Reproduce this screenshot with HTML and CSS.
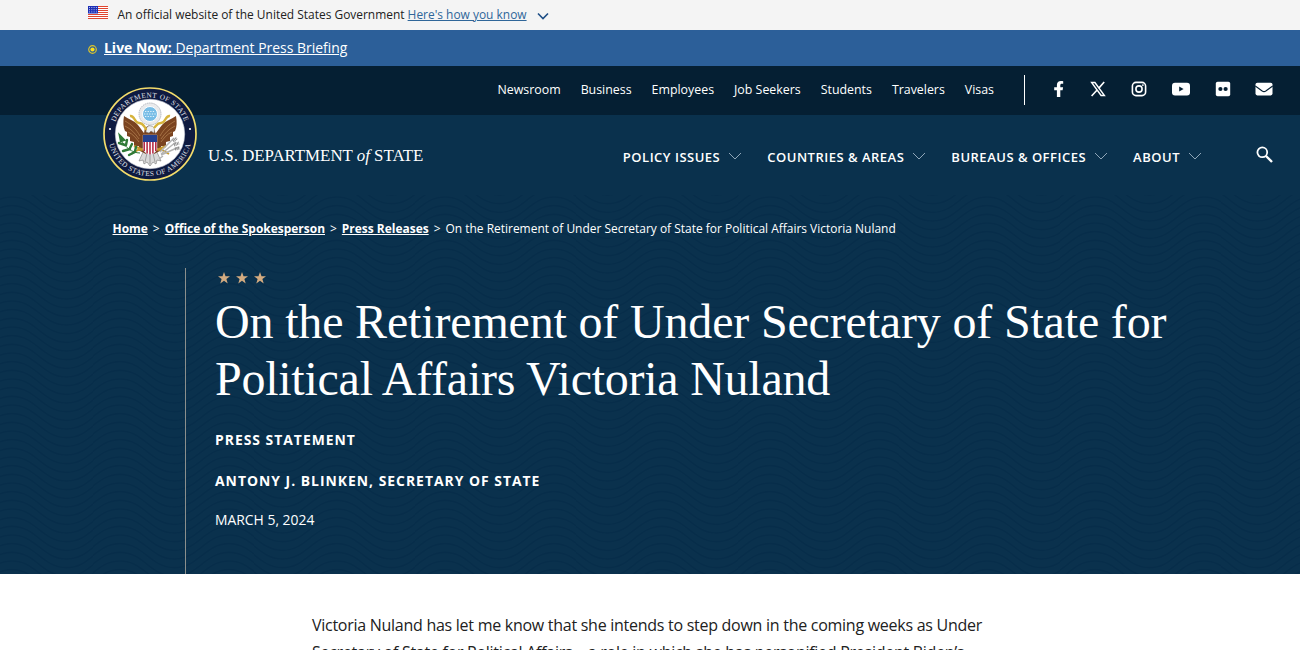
FILE: index.html
```html
<!DOCTYPE html>
<html lang="en">
  <head>
    <meta charset="UTF-8" />
    <meta name="viewport" content="width=device-width, initial-scale=1.0" />
    <title>On the Retirement of Under Secretary of State for Political Affairs Victoria Nuland</title>
    <link rel="stylesheet" href="styles.css">
  </head>
  <body>
    <div class="gov-banner">
      <svg class="flag" viewBox="0 0 20 13">
        <rect width="20" height="13" fill="#fff"/>
        <path d="M0 .5h20M0 2.5h20M0 4.5h20M0 6.5h20M0 8.5h20M0 10.5h20M0 12.5h20" stroke="#e0452f" stroke-width="1.1"/>
        <rect width="10" height="7.5" fill="#1c2fb5"/>
        <path d="M1 1.5h8M1 3.7h8M1 5.9h8" stroke="#c9cff5" stroke-width=".9" stroke-dasharray="1 1.3"/>
      </svg>
      <p>An official website of the United States Government <a href="#">Here's how you know</a></p>
      <svg class="banner-arrow" viewBox="0 0 12 8"><path d="M1 1.5l5 5 5-5" fill="none" stroke="#1f4f86" stroke-width="1.6"/></svg>
    </div>

    <div class="live-bar">
      <svg class="live-dot" viewBox="0 0 9 9">
        <circle cx="4.5" cy="4.5" r="3.8" fill="none" stroke="#d9c32e" stroke-width="1.2"/>
        <circle cx="4.5" cy="4.5" r="2.1" fill="#ffe01a"/>
      </svg>
      <a href="#"><strong>Live Now:</strong> Department Press Briefing</a>
    </div>

    <header>
      <div class="top-nav">
        <nav>
          <a href="#">Newsroom</a>
          <a href="#">Business</a>
          <a href="#">Employees</a>
          <a href="#">Job Seekers</a>
          <a href="#">Students</a>
          <a href="#">Travelers</a>
          <a href="#">Visas</a>
        </nav>
        <div class="social">
          <a href="#" aria-label="Facebook"><svg viewBox="0 0 18 18"><path d="M6.900 17V10.300H4.200V7.200h2.700V4.900C6.900 2.300 8.500 1 10.900 1c1.200 0 2.300.2 2.300.2v2.600h-1.300c-1.200 0-1.600.7-1.600 1.500v1.900h2.800l-.5 3.100h-2.300V17z" fill="#fff"/></svg></a>
          <a class="x" href="#" aria-label="X"><svg viewBox="0 0 18 18"><path d="M2.7 2.6h3.2l9.400 12.800h-3.200z" fill="none" stroke="#fff" stroke-width="1.500"/><path d="M15.200 2L9.800 8.100M8.100 10L2.600 16" stroke="#fff" stroke-width="1.600"/></svg></a>
          <a href="#" aria-label="Instagram"><svg viewBox="0 0 18 18"><rect x="2.400" y="2.400" width="13.200" height="13.200" rx="3.600" fill="none" stroke="#fff" stroke-width="1.600"/><circle cx="9" cy="9" r="3.100" fill="none" stroke="#fff" stroke-width="1.600"/><circle cx="12.900" cy="5.100" r=".9" fill="#fff"/></svg></a>
          <a class="wide" href="#" aria-label="YouTube"><svg viewBox="0 0 18 18"><rect x="0" y="2.800" width="18" height="12.600" rx="3" fill="#fff"/><path d="M7.200 6.600v5l4.400-2.500z" fill="#051f33"/></svg></a>
          <a class="wide" href="#" aria-label="Flickr"><svg viewBox="0 0 18 18"><rect x="1.800" y="1.800" width="14.400" height="14.400" rx="1.800" fill="#fff"/><circle cx="6.400" cy="9" r="2.100" fill="#051f33"/><circle cx="11.600" cy="9" r="2.100" fill="#051f33"/></svg></a>
          <a href="#" aria-label="Email"><svg viewBox="0 0 18 18"><rect x=".5" y="2.800" width="17" height="12.600" rx="1.800" fill="#fff"/><path d="M.3 6l6.900 5q1.800 1.200 3.600 0l6.900-5" fill="none" stroke="#051f33" stroke-width="1.100"/></svg></a>
        </div>
      </div>

      <div class="main-nav">
        <a class="brand" href="#">
          <svg class="seal" viewBox="0 0 94 94">
            <defs>
              <path id="ring-top" d="M10.4 47a36.6 36.6 0 0 1 73.2 0"/>
              <path id="ring-bottom" d="M5 47a42 42 0 0 0 84 0"/>
            </defs>
            <circle cx="47" cy="47" r="46" fill="#0e1a40" stroke="#f3dc6b" stroke-width="1.700"/>
            <circle cx="47" cy="47" r="34.700" fill="#fff" stroke="#cfd2dc" stroke-width=".6"/>
            <text class="seal-text"><textPath href="#ring-top" startOffset="50%">DEPARTMENT OF STATE</textPath></text>
            <text class="seal-text"><textPath href="#ring-bottom" startOffset="50%">UNITED STATES OF AMERICA</textPath></text>
            <circle cx="7" cy="42" r="1.100" fill="#fff"/>
            <circle cx="87" cy="42" r="1.100" fill="#fff"/>
            <!-- glory -->
            <circle cx="47" cy="27" r="11" fill="#e9eaec" stroke="#a6abb3" stroke-width=".8" stroke-dasharray="1.500 .7"/>
            <circle cx="47" cy="27" r="7.500" fill="#77bde6" stroke="#fff"/>
            <path d="M42 24.500h10M41 27h12M42 29.500h10" stroke="#e3f3fc" stroke-width="1.200" stroke-dasharray="1.300 1.300"/>
            <!-- tail -->
            <path d="M41 63l-5 11 4-1 1 4 3-2 3 4 3-4 3 2 1-4 4 1-5-11z" fill="#d9d9d9" stroke="#777" stroke-width=".6"/>
            <path d="M44 66l-2 9M47 66v11M50 66l2 9" stroke="#777" stroke-width=".6"/>
            <!-- wings and body -->
            <path d="M42 47c-4-4-6-10-12-13-4-2-7-4-9-5-1 6-1 11 1 15l2 1 0 4 3 1 0 4 4 1 0 4 5 0-1 4 8 4z" fill="#7a4320"/>
            <path d="M52 47c4-4 6-10 12-13 4-2 7-4 9-5 1 6 1 11-1 15l-2 1 0 4-3 1 0 4-4 1 0 4-5 0 1 4-8 4z" fill="#7a4320"/>
            <path d="M22 34c7 4 11 8 15 15M22 39c6 3 10 7 14 13M25 45c5 2 8 6 11 10M72 34c-7 4-11 8-15 15M72 39c-6 3-10 7-14 13M69 45c-5 2-8 6-11 10" fill="none" stroke="#b68554" stroke-width=".7"/>
            <path d="M41 49c0-6 1-9 4-10 4-1 7 2 8 10z" fill="#7a4320"/>
            <path d="M43 45c0-5 2-7 5-6 3 0 4 3 3 7l-3-2-2 2z" fill="#eee" stroke="#777" stroke-width=".5"/>
            <path d="M44 41l-3 1.500 2.500 1z" fill="#d9a520"/>
            <!-- ribbon -->
            <path d="M27 29c5-1 4 7 9 7 4 0 4 2 7 6M67 29c-5-1-4 7-9 7-4 0-4 2-7 5" fill="none" stroke="#d6b33b" stroke-width="2.400"/>
            <path d="M31 59l9 4M63 59l-9 4M28 67l7-4 5-1M66 67l-7-4-5-1" fill="none" stroke="#c99b2c" stroke-width="2"/>
            <!-- olive branch and arrows -->
            <path d="M37 66c-8 0-15-6-19-13" fill="none" stroke="#2f7a37" stroke-width="1"/>
            <path d="M18 54l-1-5 4 4zM22 58l-6-2M23 58l1-5M27 62l-7 2M27 61l2-4M32 65l-6 3M32 64l1-4" fill="#2f7a37" stroke="#2f7a37" stroke-width="2.400" stroke-linecap="round"/>
            <path d="M58 67l15-12M58 68l18-8M57 65l14-14M60 69l-4 3" fill="none" stroke="#b3b3b3" stroke-width="1.500"/>
            <path d="M70 54l4-3M71 58l5-2M72 62l5-1" stroke="#8b8b8b" stroke-width="3" stroke-dasharray="1 .6"/>
            <!-- shield -->
            <path d="M40 48h14v14q-1 4-7 6-6-2-7-6z" fill="#fff" stroke="#c8cada" stroke-width=".5"/>
            <path d="M41.200 55v9M44.100 55v11.500M47 55v12.500M49.900 55v11.500M52.800 55v9" stroke="#b3223c" stroke-width="1.500"/>
            <rect x="40" y="48" width="14" height="7" fill="#24408f"/>
          </svg>
          <span class="brand-name">U.S. DEPARTMENT <em>of</em> STATE</span>
        </a>
        <nav>
          <a href="#">Policy Issues <svg viewBox="0 0 14 8"><path d="M1 1l6 6 6-6"/></svg></a>
          <a href="#">Countries &amp; Areas <svg viewBox="0 0 14 8"><path d="M1 1l6 6 6-6"/></svg></a>
          <a href="#">Bureaus &amp; Offices <svg viewBox="0 0 14 8"><path d="M1 1l6 6 6-6"/></svg></a>
          <a href="#">About <svg viewBox="0 0 14 8"><path d="M1 1l6 6 6-6"/></svg></a>
        </nav>
        <button class="search" aria-label="Search">
          <svg viewBox="0 0 17 17"><circle cx="6.300" cy="6.300" r="4.900" fill="none" stroke="#fff" stroke-width="1.800"/><path d="M10 10l6 6" stroke="#fff" stroke-width="2.400"/></svg>
        </button>
      </div>
    </header>

    <section class="hero">
      <div class="breadcrumbs">
        <a href="#">Home</a><span>&gt;</span><a href="#">Office of the Spokesperson</a><span>&gt;</span><a href="#">Press Releases</a><span>&gt;</span>On the Retirement of Under Secretary of State for Political Affairs Victoria Nuland
      </div>
      <div class="hero-content">
        <svg class="stars" viewBox="0 0 50 12" fill="#d3ab80">
          <path id="star" d="M6 0l1.500 4.300H12L8.400 7l1.300 4.400L6 8.800l-3.700 2.600L3.600 7 0 4.300h4.500z"/>
          <use href="#star" x="18"/>
          <use href="#star" x="36"/>
        </svg>
        <h1><span class="line-one">On the Retirement of Under Secretary of State for</span> <span class="line-two">Political Affairs Victoria Nuland</span></h1>
        <p class="doctype">Press Statement</p>
        <p class="author">Antony J. Blinken, Secretary of State</p>
        <p class="date">March 5, 2024</p>
      </div>
    </section>

    <main>
      <p>Victoria Nuland has let me know that she intends to step down in the coming weeks as Under Secretary of State for Political Affairs – a role in which she has personified President Biden’s</p>
    </main>
  </body>
</html>
```
FILE: styles.css
```css
* {
  box-sizing: border-box;
}
body {
  font-family: "Open Sans", sans-serif;
  margin: 0;
  height: 650px;
  overflow: hidden;
  color: #212121;
  background: #fff;
}
p {
  margin: 0;
}
svg {
  display: block;
}
.gov-banner {
  display: flex;
  height: 29.5px;
  padding-left: 87.5px;
  background: #f4f4f4;
  font-size: 11.94px;
  line-height: 29px;
}
.gov-banner a {
  color: #2f6699;
}
.flag {
  width: 20px;
  height: 13px;
  margin: 6px 10px 0 0;
}
.banner-arrow {
  width: 12px;
  height: 8px;
  margin: 12px 0 0 10px;
}
.live-bar {
  display: flex;
  align-items: center;
  height: 36px;
  padding-left: 88px;
  background: #2c5f99;
  font-size: 13.95px;
}
.live-bar a {
  color: #fff;
}
.live-dot {
  width: 9px;
  height: 9px;
  margin: 3px 7px 0 0;
}
header {
  background: #0a314d;
}
.top-nav {
  display: flex;
  justify-content: flex-end;
  height: 49.5px;
  background: #051f33;
}
.top-nav nav {
  display: flex;
  gap: 20px;
  margin-right: 29.5px;
  font-size: 12.38px;
  line-height: 47px;
}
.top-nav nav a {
  color: #fff;
  text-decoration: none;
}
.social {
  display: flex;
  gap: 23.1px;
  height: 30px;
  margin-top: 9.5px;
  padding: 5px 27px 0 25px;
  border-left: 1px solid #fff;
}
.social svg {
  width: 18px;
  height: 18px;
}
.social .x {
  margin-left: -2px;
}
.social .wide {
  margin-left: 1px;
}
.main-nav {
  display: flex;
  height: 80px;
  padding-left: 103px;
}
.brand {
  display: flex;
  color: #fff;
  text-decoration: none;
}
.seal {
  width: 94px;
  height: 94px;
  margin-top: -28px;
}
.seal-text {
  font-family: "Liberation Serif", serif;
  font-size: 7.2px;
  letter-spacing: 0.5px;
  fill: #e4e6ec;
  text-anchor: middle;
}
.brand-name {
  width: 218px;
  margin: 30px 0 0 11px;
  font-family: "Liberation Serif", serif;
  font-size: 16.85px;
  line-height: 22px;
  white-space: nowrap;
}
.main-nav nav {
  display: flex;
  gap: 25px;
  margin-left: auto;
  font-size: 13px;
  font-weight: 600;
  letter-spacing: 0.5px;
  line-height: 84px;
}
.main-nav nav a {
  display: flex;
  align-items: center;
  gap: 8px;
  height: 84px;
  color: #fff;
  text-decoration: none;
  text-transform: uppercase;
}
.main-nav nav svg {
  width: 14px;
  height: 8px;
  margin-bottom: 2px;
  fill: none;
  stroke: #8fa6b8;
}
.search {
  width: 17px;
  height: 17px;
  margin: 30.5px 27.5px 0 53.5px;
  padding: 0;
  border: 0;
  background: none;
}
.hero {
  display: flow-root;
  height: 379px;
  background-color: #0a314d;
  background-image: url("data:image/svg+xml,%3Csvg xmlns='http://www.w3.org/2000/svg' width='108.33' height='26' viewBox='0 0 108.33 26'%3E%3Cg fill='none' stroke='%23042a46' stroke-opacity='.55' stroke-width='1.6'%3E%3Cpath d='M0 -26C24 -26 30 -2 54.16 -2S84 -26 108.33 -26M0 -17.33C24 -17.33 30 6.67 54.16 6.67S84 -17.33 108.33 -17.33M0 -8.67C24 -8.67 30 15.33 54.16 15.33S84 -8.67 108.33 -8.67M0 0C24 0 30 24 54.16 24S84 0 108.33 0M0 8.67C24 8.67 30 32.67 54.16 32.67S84 8.67 108.33 8.67M0 17.33C24 17.33 30 41.33 54.16 41.33S84 17.33 108.33 17.33M0 26C24 26 30 50 54.16 50S84 26 108.33 26'/%3E%3C/g%3E%3C/svg%3E");
  background-position: 12px 2px;
  color: #fff;
}
.breadcrumbs {
  padding: 25px 0 0 112.5px;
  font-size: 11.96px;
  line-height: 17px;
}
.breadcrumbs a {
  color: #fff;
  font-weight: bold;
}
.breadcrumbs span {
  margin: 0 5px;
}
.hero-content {
  height: 306px;
  margin: 31px 0 0 185px;
  padding: 4px 0 0 29px;
  border-left: 1px solid #8b8f8c;
}
.stars {
  width: 50px;
  height: 12px;
  margin-left: 3px;
}
h1 {
  margin: 9px 0 0;
  font-family: "Liberation Serif", serif;
  font-size: 48px;
  font-weight: normal;
  line-height: 57px;
}
h1 span {
  display: block;
  white-space: nowrap;
}
.line-one {
  letter-spacing: -0.17px;
}
.line-two {
  letter-spacing: -0.25px;
}
.doctype,
.author {
  font-size: 13.9px;
  font-weight: bold;
  letter-spacing: 1px;
  line-height: 20px;
  text-transform: uppercase;
}
.doctype {
  margin-top: 23px;
}
.author {
  margin-top: 21px;
}
.date {
  margin-top: 19px;
  font-size: 13.9px;
  line-height: 20px;
  text-transform: uppercase;
}
main {
  width: 690px;
  margin: 38px 0 0 312px;
  font-size: 16px;
  letter-spacing: -0.27px;
  line-height: 27px;
}
```
